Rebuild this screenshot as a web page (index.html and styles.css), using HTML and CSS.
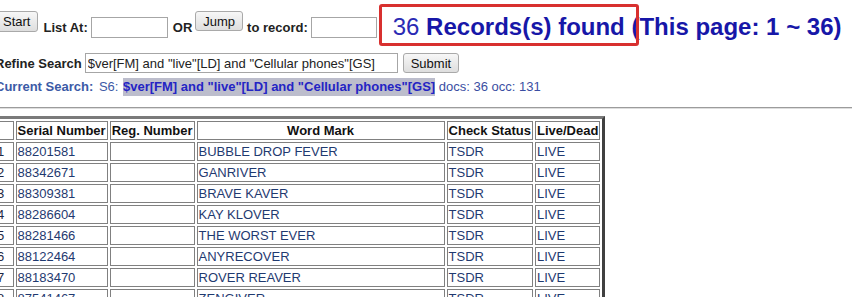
FILE: index.html
```html
<!DOCTYPE html>
<html lang="en">
<head>
    <meta charset="UTF-8">
    <title>TESS - Search Results</title>
    <link rel="stylesheet" href="styles.css">
</head>
<body>

<div class="page">
    <div class="toolbar">
        <button type="button" class="btn btn-start">Start</button>
        <label class="lbl lbl-list" for="listAt">List At:</label>
        <input type="text" class="field field-list" id="listAt">
        <span class="lbl lbl-or">OR</span>
        <button type="button" class="btn btn-jump">Jump</button>
        <label class="lbl lbl-record" for="toRecord">to record:</label>
        <input type="text" class="field field-record" id="toRecord">
        <div class="found">
            <span class="found-count">36</span> <b>Records(s) found (This page: 1 ~ 36)</b>
            <span class="mark-box"></span>
        </div>
    </div>

    <form class="refine">
        <label class="lbl" for="refineQuery">Refine Search</label>
        <input type="text" class="field field-refine" id="refineQuery" value='$ver[FM] and "live"[LD] and "Cellular phones"[GS]'>
        <button type="button" class="btn btn-submit">Submit</button>
    </form>

    <p class="current">
        <b>Current Search:</b> <span class="set">S6:</span> <span class="query">$ver[FM] and "live"[LD] and "Cellular phones"[GS]</span> docs: 36 occ: 131
    </p>

    <hr class="rule">

    <table class="results">
        <tr>
            <th class="col-num"></th>
            <th>Serial Number</th>
            <th>Reg. Number</th>
            <th class="col-mark">Word Mark</th>
            <th>Check Status</th>
            <th>Live/Dead</th>
        </tr>
        <tr>
            <td class="num">1</td>
            <td><a href="#">88201581</a></td>
            <td></td>
            <td><a href="#">BUBBLE DROP FEVER</a></td>
            <td><a href="#">TSDR</a></td>
            <td><a href="#">LIVE</a></td>
        </tr>
        <tr>
            <td class="num">2</td>
            <td><a href="#">88342671</a></td>
            <td></td>
            <td><a href="#">GANRIVER</a></td>
            <td><a href="#">TSDR</a></td>
            <td><a href="#">LIVE</a></td>
        </tr>
        <tr>
            <td class="num">3</td>
            <td><a href="#">88309381</a></td>
            <td></td>
            <td><a href="#">BRAVE KAVER</a></td>
            <td><a href="#">TSDR</a></td>
            <td><a href="#">LIVE</a></td>
        </tr>
        <tr>
            <td class="num">4</td>
            <td><a href="#">88286604</a></td>
            <td></td>
            <td><a href="#">KAY KLOVER</a></td>
            <td><a href="#">TSDR</a></td>
            <td><a href="#">LIVE</a></td>
        </tr>
        <tr>
            <td class="num">5</td>
            <td><a href="#">88281466</a></td>
            <td></td>
            <td><a href="#">THE WORST EVER</a></td>
            <td><a href="#">TSDR</a></td>
            <td><a href="#">LIVE</a></td>
        </tr>
        <tr>
            <td class="num">6</td>
            <td><a href="#">88122464</a></td>
            <td></td>
            <td><a href="#">ANYRECOVER</a></td>
            <td><a href="#">TSDR</a></td>
            <td><a href="#">LIVE</a></td>
        </tr>
        <tr>
            <td class="num">7</td>
            <td><a href="#">88183470</a></td>
            <td></td>
            <td><a href="#">ROVER REAVER</a></td>
            <td><a href="#">TSDR</a></td>
            <td><a href="#">LIVE</a></td>
        </tr>
        <tr>
            <td class="num">8</td>
            <td><a href="#">87541467</a></td>
            <td></td>
            <td><a href="#">ZENGIVER</a></td>
            <td><a href="#">TSDR</a></td>
            <td><a href="#">LIVE</a></td>
        </tr>
    </table>
</div>

</body>
</html>
```

FILE: styles.css
```css
html {
    overflow: hidden;
}
body {
    margin: 0;
    background-color: #ffffff;
    font-family: 'Liberation Sans', Arial, sans-serif;
    font-size: 13px;
    color: #222;
}
.page {
    margin-left: -5px;
}

/* top navigation row */
.toolbar {
    display: flex;
    align-items: flex-start;
    height: 53px;
    white-space: nowrap;
}
.toolbar > * {
    flex: none;
}
.lbl {
    font-weight: bold;
    line-height: 15px;
    color: #222;
}
.toolbar .lbl {
    margin-top: 20px;
}
.btn {
    box-sizing: border-box;
    height: 21px;
    padding: 0 7px;
    font-family: inherit;
    font-size: 13px;
    color: #111;
    background: linear-gradient(#f7f7f7, #dedede);
    border: 1px solid #a9a9a9;
    border-radius: 3px;
}
.field {
    box-sizing: border-box;
    height: 21px;
    padding: 0 2px;
    font-family: inherit;
    font-size: 13px;
    color: #222;
    border: 1px solid #a6a6a6;
    background-color: #fff;
}
.btn-start {
    margin-top: 11px;
}
.lbl-list {
    margin-left: 5px;
}
.field-list {
    width: 77px;
    margin: 17px 0 0 3px;
}
.lbl-or {
    margin-left: 5px;
}
.btn-jump {
    height: 20px;
    margin: 11px 0 0 3px;
}
.lbl-record {
    margin-left: 4px;
}
.field-record {
    width: 66px;
    margin: 17px 0 0 3px;
}
.found {
    position: relative;
    margin: 13px 0 0 16px;
    font-size: 24px;
    line-height: 28px;
    color: #1717a8;
}
.found-count {
    color: #2a2ab4;
}
.mark-box {
    position: absolute;
    left: -14px;
    top: -9px;
    width: 260px;
    height: 42px;
    box-sizing: border-box;
    border: 3px solid #d8302f;
    border-radius: 3px;
}

/* refine row */
.refine {
    display: flex;
    align-items: center;
    height: 20px;
    margin: 0;
    white-space: nowrap;
}
.field-refine {
    width: 313px;
    height: 20px;
    margin-left: 3px;
}
.btn-submit {
    height: 20px;
    margin-left: 5px;
}

.current {
    margin: 6px 0 0;
    line-height: 15px;
    white-space: nowrap;
    color: #3a4ea2;
}
.current b {
    color: #3c5aa6;
}
.set {
    margin-left: 2px;
    color: #3c5aa6;
}
.query {
    margin-left: 1px;
    padding: 1px 0 2px;
    font-weight: bold;
    color: #2424c4;
    background-color: #bcbdcc;
}

.rule {
    height: 0;
    margin: 13px 0 7px;
    border: 0;
    border-top: 1px solid #9c9c9c;
    border-bottom: 1px solid #dedede;
}

/* results table */
.results {
    margin-left: -5px;
    border-collapse: separate;
    border-spacing: 2px;
    border: 3px solid;
    border-color: #7a7a7a #404040 #404040 #7a7a7a;
    font-size: 13px;
}
.results th, .results td {
    height: 15px;
    padding: 1px;
    line-height: 15px;
    border: 1px solid #808080;
    white-space: nowrap;
}
.results th {
    font-weight: bold;
    color: #111;
    text-align: center;
}
.results td {
    text-align: left;
}
.results th.col-num {
    width: 14.5px;
}
.results th.col-mark {
    width: 244px;
}
.results td.num {
    color: #1d2745;
}
.results a {
    color: #1f3a70;
    text-decoration: none;
}
```
